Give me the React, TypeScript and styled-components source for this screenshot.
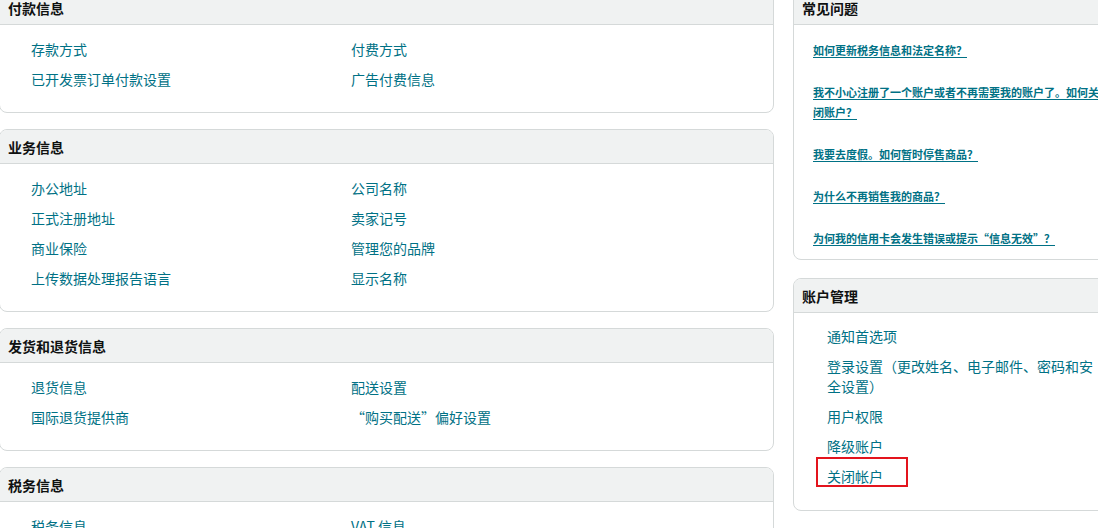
import React from "react";
import styled, { createGlobalStyle } from "styled-components";

const Global = createGlobalStyle`
  html, body { margin: 0; padding: 0; background: #fff; overflow: hidden; }
  body { font-family: "Noto Sans CJK SC", "Noto Sans", Arial, sans-serif; color: #0f1111; }
`;

const Page = styled.div`
  display: grid;
  grid-template-columns: 775px 340px;
  column-gap: 19px;
  margin: -10px 0 0 -1px;
  align-items: start;
`;

const Column = styled.div<{ $gap: number }>`
  display: flex;
  flex-direction: column;
  gap: ${(p) => p.$gap}px;
`;

const Card = styled.section`
  border: 1px solid #d5d9d9;
  border-radius: 8px;
  background: #fff;
  overflow: hidden;
`;

const CardHeader = styled.h3`
  margin: 0;
  height: 32px;
  line-height: 32px;
  padding: 1px 0 0 8px;
  background: #f0f2f2;
  border-bottom: 1px solid #d5d9d9;
  font-size: 14px;
  font-weight: 700;
  color: #0f1111;
`;

const LinkGrid = styled.div`
  display: grid;
  grid-template-columns: 320px 1fr;
  grid-auto-rows: 30px;
  padding: 9px 0 18px 31px;
  font-size: 14px;
  line-height: 30px;
`;

const Link = styled.a`
  color: #007185;
  font-size: 14px;
  line-height: 30px;
  text-decoration: none;
  white-space: nowrap;
`;

const FaqList = styled.div`
  display: flex;
  flex-direction: column;
  gap: 22px;
  padding: 15px 28px 11px 19px;
`;

const FaqItem = styled.div`
  font-size: 11px;
  line-height: 20px;
`;

const FaqLink = styled.a`
  color: #007185;
  font-size: 11px;
  font-weight: 700;
  line-height: 20px;
  text-decoration: underline;
  text-underline-offset: 2px;
`;

const AccountList = styled.div`
  display: flex;
  flex-direction: column;
  padding: 8px 34px 19px 33px;
`;

const AccountItem = styled.div`
  padding: 5px 0;
  font-size: 14px;
  line-height: 20px;
`;

const AccountLink = styled.a<{ $marked?: boolean }>`
  position: relative;
  color: #007185;
  font-size: 14px;
  line-height: 20px;
  text-decoration: none;
  ${(p) =>
    p.$marked &&
    `
    &::after {
      content: "";
      position: absolute;
      left: -11px;
      right: -25px;
      top: -9px;
      bottom: -1px;
      border: 2px solid #e3141d;
    }
  `}
`;

const sections: { title: string; links: string[] }[] = [
  { title: "付款信息", links: ["存款方式", "付费方式", "已开发票订单付款设置", "广告付费信息"] },
  {
    title: "业务信息",
    links: ["办公地址", "公司名称", "正式注册地址", "卖家记号", "商业保险", "管理您的品牌", "上传数据处理报告语言", "显示名称"],
  },
  { title: "发货和退货信息", links: ["退货信息", "配送设置", "国际退货提供商", "“购买配送”偏好设置"] },
  { title: "税务信息", links: ["税务信息", "VAT 信息"] },
];

const faqs = [
  "如何更新税务信息和法定名称？",
  "我不小心注册了一个账户或者不再需要我的账户了。如何关闭账户？",
  "我要去度假。如何暂时停售商品？",
  "为什么不再销售我的商品？",
  "为何我的信用卡会发生错误或提示“信息无效”？",
];

const accountLinks = ["通知首选项", "登录设置（更改姓名、电子邮件、密码和安全设置）", "用户权限", "降级账户", "关闭帐户"];

export default function App() {
  return (
    <>
      <Global />
      <Page>
        <Column $gap={16}>
          {sections.map((s) => (
            <Card key={s.title}>
              <CardHeader>{s.title}</CardHeader>
              <LinkGrid>
                {s.links.map((l) => (
                  <Link key={l} href="#">
                    {l}
                  </Link>
                ))}
              </LinkGrid>
            </Card>
          ))}
        </Column>
        <Column $gap={18}>
          <Card>
            <CardHeader>常见问题</CardHeader>
            <FaqList>
              {faqs.map((f) => (
                <FaqItem key={f}>
                  <FaqLink href="#">{f} </FaqLink>
                </FaqItem>
              ))}
            </FaqList>
          </Card>
          <Card>
            <CardHeader>账户管理</CardHeader>
            <AccountList>
              {accountLinks.map((l, i) => (
                <AccountItem key={l}>
                  <AccountLink href="#" $marked={i === accountLinks.length - 1}>
                    {l}
                  </AccountLink>
                </AccountItem>
              ))}
            </AccountList>
          </Card>
        </Column>
      </Page>
    </>
  );
}
